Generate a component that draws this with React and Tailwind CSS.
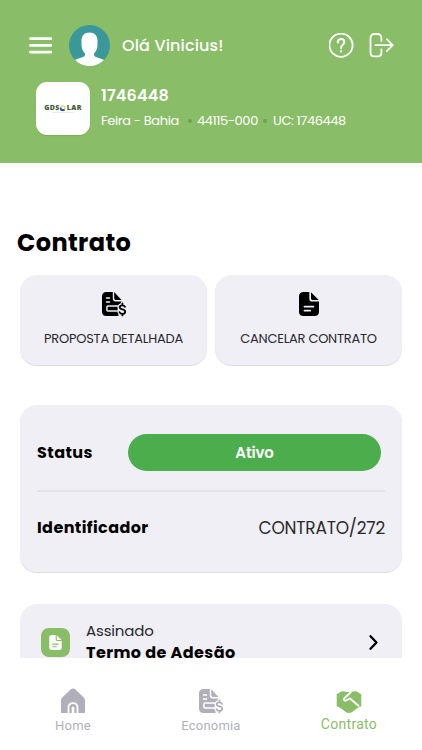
import React from "react";

const MenuIcon = () => (
  <svg width="24" height="18" viewBox="0 0 24 18" fill="none" stroke="white" strokeWidth="2.8" strokeLinecap="round">
    <path d="M1.4 1.6h20.4M1.4 8.4h20.4M1.4 15.2h20.4" />
  </svg>
);

const Avatar = () => (
  <svg width="41" height="41" viewBox="0 0 41 41">
    <defs>
      <clipPath id="avatar">
        <circle cx="20.5" cy="20.5" r="20.5" />
      </clipPath>
    </defs>
    <g clipPath="url(#avatar)">
      <rect width="41" height="41" fill="#3a989a" />
      <path
        fill="white"
        d="M20.5 7.5c-5 0-8 3.2-8 8V20c0 3.500 1.300 6.500 3.400 8.300.5 2-.4 3.200-2.400 3.900C10 33.300 7.500 34 5 35.500V42h31v-6.500c-2.500-1.500-5-2.200-8.500-3.300-2-.7-2.900-1.900-2.400-3.900 2.100-1.800 3.400-4.800 3.400-8.300v-4.500c0-4.800-3-8-8-8z"
      />
    </g>
  </svg>
);

const HelpIcon = () => (
  <svg width="26" height="26" viewBox="0 0 26 26" fill="none" stroke="white" strokeWidth="1.8" strokeLinecap="round" strokeLinejoin="round">
    <circle cx="12" cy="12.2" r="11.6" />
    <path strokeWidth="2" d="M8.800 9.400c0-2.200 1.300-3.500 3.200-3.500s3.300 1.300 3.300 3.100c0 2.700-3.300 2.800-3.300 5.900" />
    <circle cx="12" cy="18.3" r="0.6" fill="white" strokeWidth="1.2" />
  </svg>
);

const LogoutIcon = () => (
  <svg width="26" height="26" viewBox="0 0 26 26" fill="none" stroke="white" strokeWidth="1.8" strokeLinecap="round" strokeLinejoin="round">
    <path d="M12.400 8V5c0-2.500-1.500-4-4-4H5.500c-2.500 0-4 1.500-4 4v14.400c0 2.500 1.500 4 4 4h2.900c2.500 0 4-1.500 4-4v-2.900" />
    <path d="M6.500 12.200h17.300M17.800 6.200l6 6-6 6" />
  </svg>
);

// cut = colour of the surface behind the glyph
const InvoiceIcon = ({ cut }) => (
  <svg width="26" height="26" viewBox="0 0 26 26" fill="none">
    <path fill="currentColor" d="M5.500 1h6.300v6.500c0 2 1 3 3 3h5.700v3l-3 4V25h-12C2.500 25 1 23.500 1 20.500v-15C1 2.500 2.500 1 5.500 1z" />
    <path fill="currentColor" d="M13.200 1l7.300 8h-5.300c-1.400 0-2-.6-2-2z" />
    <path stroke={cut} strokeWidth="1.5" strokeLinecap="round" d="M5.500 7h3M5.500 11h3" />
    <rect x="5.900" y="15" width="11.500" height="5" rx="1" stroke={cut} strokeWidth="1.5" />
    <path
      stroke={cut}
      strokeWidth="4"
      strokeLinecap="round"
      d="M24 15.800c-.5-1-1.300-1.500-2.600-1.500-1.700 0-2.700.7-2.700 2 0 3 5.500 1.300 5.500 4.400 0 1.400-1.100 2.200-2.800 2.200-1.500 0-2.400-.6-2.900-1.800M21.400 12.800v11"
    />
    <path
      stroke="currentColor"
      strokeWidth="1.8"
      strokeLinecap="round"
      d="M24 15.800c-.5-1-1.300-1.500-2.600-1.500-1.700 0-2.700.7-2.700 2 0 3 5.500 1.300 5.500 4.400 0 1.400-1.100 2.200-2.800 2.200-1.500 0-2.400-.6-2.900-1.800M21.400 12.500V14M21.400 23.200v1.200"
    />
  </svg>
);

const DocumentIcon = ({ cut, className }) => (
  <svg className={className} viewBox="0 0 20 24" fill="none">
    <path fill="currentColor" d="M4.500 0h5.800v6.400c0 2.200 1 3.200 3.200 3.200H20v9.900c0 3-1.500 4.500-4.500 4.500h-11C1.500 24 0 22.500 0 19.500v-15C0 1.500 1.500 0 4.500 0z" />
    <path fill="currentColor" d="M12 .3l7.700 7.800h-5.500c-1.500 0-2.200-.7-2.200-2.200z" />
    <path stroke={cut} strokeWidth="1.8" strokeLinecap="round" d="M5.500 14.600h8.800M5.500 18.700h5.600" />
  </svg>
);

const HomeIcon = () => (
  <svg width="26" height="26" viewBox="0 0 26 26" fill="none">
    <path
      fill="currentColor"
      d="M10.700 1.300c1.400-1.200 3.200-1.200 4.600 0l8.200 7.900c1 1 1.500 2 1.500 3.300v11.400c0 .8-.4 1.200-1.200 1.200H2.200c-.8 0-1.200-.4-1.200-1.200V12.500c0-1.300.5-2.300 1.500-3.300z"
    />
    <path stroke="white" strokeWidth="1.8" d="M8.500 25.200v-5.400c0-2.800 1.700-4.600 4.500-4.600s4.500 1.800 4.500 4.600v5.400" />
    <path fill="white" d="M11.700 25.200v-5c0-1 .4-1.500 1.300-1.500s1.300.5 1.300 1.500v5z" />
  </svg>
);

const HandshakeIcon = () => (
  <svg width="26" height="24" viewBox="0 0 26 24" fill="none">
    <path
      fill="currentColor"
      d="M.7 4.300C3 3.500 4.500 1.200 6.500 1.200c2.300 0 4.300.9 6.500.9s4.200-.9 6.500-.9c2 0 3.500 2.300 5.800 3.100v12c-3.600 1.200-6 3.700-9 5.600-2.300 1.500-4.300 1.500-6.600 0-3-1.900-5.400-4.400-9-5.600z"
    />
    <path stroke="white" strokeWidth="1.9" strokeLinecap="round" strokeLinejoin="round" d="M14.500 2.500L8.300 8.300c-1 1.200.2 2.700 1.700 2.300 1.500-.4 2.400-1.800 4-2.100l8.500 7.300" />
  </svg>
);

const ActionCard = ({ icon, children, className }) => (
  <button className="flex h-[90px] flex-1 flex-col items-center rounded-[17px] bg-[#f0eff5] pt-4 shadow-[0_1px_1px_#dcdbe2]">
    <span className="flex h-[26px] items-center">{icon}</span>
    <span className={`mt-3 whitespace-nowrap text-[13px] leading-5 text-[#29292d] ${className}`}>{children}</span>
  </button>
);

const Header = () => (
  <header className="h-[163px] bg-[#8abd67] pt-[25px] text-white">
    <div className="flex h-[41px] items-center pl-[29px] pr-[27px]">
      <MenuIcon />
      <div className="ml-4">
        <Avatar />
      </div>
      <h2 className="ml-3 whitespace-nowrap text-[16px] font-medium tracking-[0.15px]">Olá Vinicius!</h2>
      <div className="ml-auto flex gap-[14px]">
        <HelpIcon />
        <LogoutIcon />
      </div>
    </div>

    <div className="mt-4 flex pl-[36px]">
      <div className="flex h-[53px] w-[54px] flex-col items-center justify-center rounded-[11px] bg-white shadow-[0_1px_1px_#7bad59]">
        <div className="flex items-center font-['Open_Sans',sans-serif] text-[7px] font-extrabold leading-none tracking-[0.4px] text-[#455a39]">
          GDS
          <svg width="6" height="6" viewBox="0 0 6 6">
            <circle cx="2.700" cy="3" r="2.200" fill="none" stroke="#e9cf58" strokeWidth="1.2" />
            <path d="M.5 2.500c0 2.500 2 3.500 4 2.200" fill="none" stroke="#2554a4" strokeWidth="2" />
          </svg>
          <span className="ml-px">LAR</span>
        </div>
        <div className="mt-px h-px w-[22px] bg-[#e6eee7]" />
      </div>
      <div className="ml-[11px]">
        <p className="mt-[3px] text-[16px] font-semibold leading-[22px] tracking-[0.15px]">1746448</p>
        <div className="mt-1 flex items-center whitespace-nowrap text-[13px] leading-5">
          <span className="w-[78px] tracking-[-0.36px]">Feira - Bahia</span>
          <i className="ml-[9px] mr-[5px] size-1 rounded-full bg-[#6ba54b]" />
          <span className="w-[61px] tracking-[-0.4px]">44115-000</span>
          <i className="ml-[5px] mr-[6px] size-1 rounded-full bg-[#6ba54b]" />
          <span className="tracking-[-0.4px]">UC: 1746448</span>
        </div>
      </div>
    </div>
  </header>
);

const BottomNav = () => (
  <nav className="flex h-[92px] bg-white font-['Roboto',sans-serif] text-[13px] tracking-[0.2px] text-[#b1b0ba]">
    <a className="flex w-[146px] flex-col items-center pt-[30px]">
      <HomeIcon />
      <span className="mt-[2px] leading-5">Home</span>
    </a>
    <a className="flex w-[130px] flex-col items-center pt-[30px]">
      <InvoiceIcon cut="#ffffff" />
      <span className="mt-[2px] leading-5">Economia</span>
    </a>
    <a className="flex w-[146px] flex-col items-center pt-8 text-[14px] tracking-[0.3px] text-[#8abd67]">
      <HandshakeIcon />
      <span className="leading-5">Contrato</span>
    </a>
  </nav>
);

const App = () => {
  return (
    <div className="flex h-[750px] w-[422px] flex-col overflow-hidden bg-white font-['Poppins','Inter',sans-serif]">
      <Header />

      <main className="h-[495px] overflow-hidden px-5 pt-[64px]">
        <h1 className="-ml-[3px] text-[24px] font-bold leading-8 tracking-[0.4px] text-black">Contrato</h1>

        <div className="mt-4 flex gap-2">
          <ActionCard icon={<InvoiceIcon cut="#f0eff5" />} className="tracking-[-0.24px]">
            PROPOSTA DETALHADA
          </ActionCard>
          <ActionCard icon={<DocumentIcon cut="#f0eff5" className="h-6 w-5" />} className="tracking-[-0.26px]">
            CANCELAR CONTRATO
          </ActionCard>
        </div>

        {/* Contract status */}
        <section className="mt-10 h-[167px] rounded-[17px] bg-[#f0eff5] px-[17px] pt-[29px] shadow-[0_1px_1px_#dcdbe2]">
          <div className="flex h-[37px] items-center justify-between pr-1">
            <span className="text-[16px] font-bold tracking-[0.4px]">Status</span>
            <span className="flex h-[37px] w-[253px] items-center justify-center rounded-full bg-[#4cad4c] pt-px text-[15px] font-semibold tracking-[-0.2px] text-white">
              Ativo
            </span>
          </div>
          <div className="mt-[19px] h-[2px] bg-[#e4e3e9]" />
          <div className="mt-6 flex items-center justify-between leading-6">
            <span className="text-[16px] font-bold tracking-[0.4px]">Identificador</span>
            <span className="-mt-px text-[17px] tracking-[-0.2px] text-[#29292d]">CONTRATO/272</span>
          </div>
        </section>

        {/* Signed document */}
        <section className="mt-8 flex h-[80px] rounded-[17px] bg-[#f0eff5] pl-[21px] pr-[23px]">
          <div className="mt-6 flex size-[29px] items-center justify-center rounded-lg bg-[#8abd67] text-white">
            <DocumentIcon cut="#8abd67" className="h-[15px] w-[13px]" />
          </div>
          <div className="ml-4 mt-4 whitespace-nowrap">
            <p className="text-[15px] leading-[22px] tracking-[-0.15px] text-[#29292d]">Assinado</p>
            <p className="text-[16px] font-bold leading-[21px] tracking-[0.42px]">Termo de Adesão</p>
          </div>
          <svg className="ml-auto mt-[30px]" width="11" height="17" viewBox="0 0 11 17" fill="none" stroke="black" strokeWidth="2.3" strokeLinecap="round" strokeLinejoin="round">
            <path d="M2.500 2.200l6 6.300-6 6.300" />
          </svg>
        </section>
      </main>

      <BottomNav />
    </div>
  );
};

export default App;
